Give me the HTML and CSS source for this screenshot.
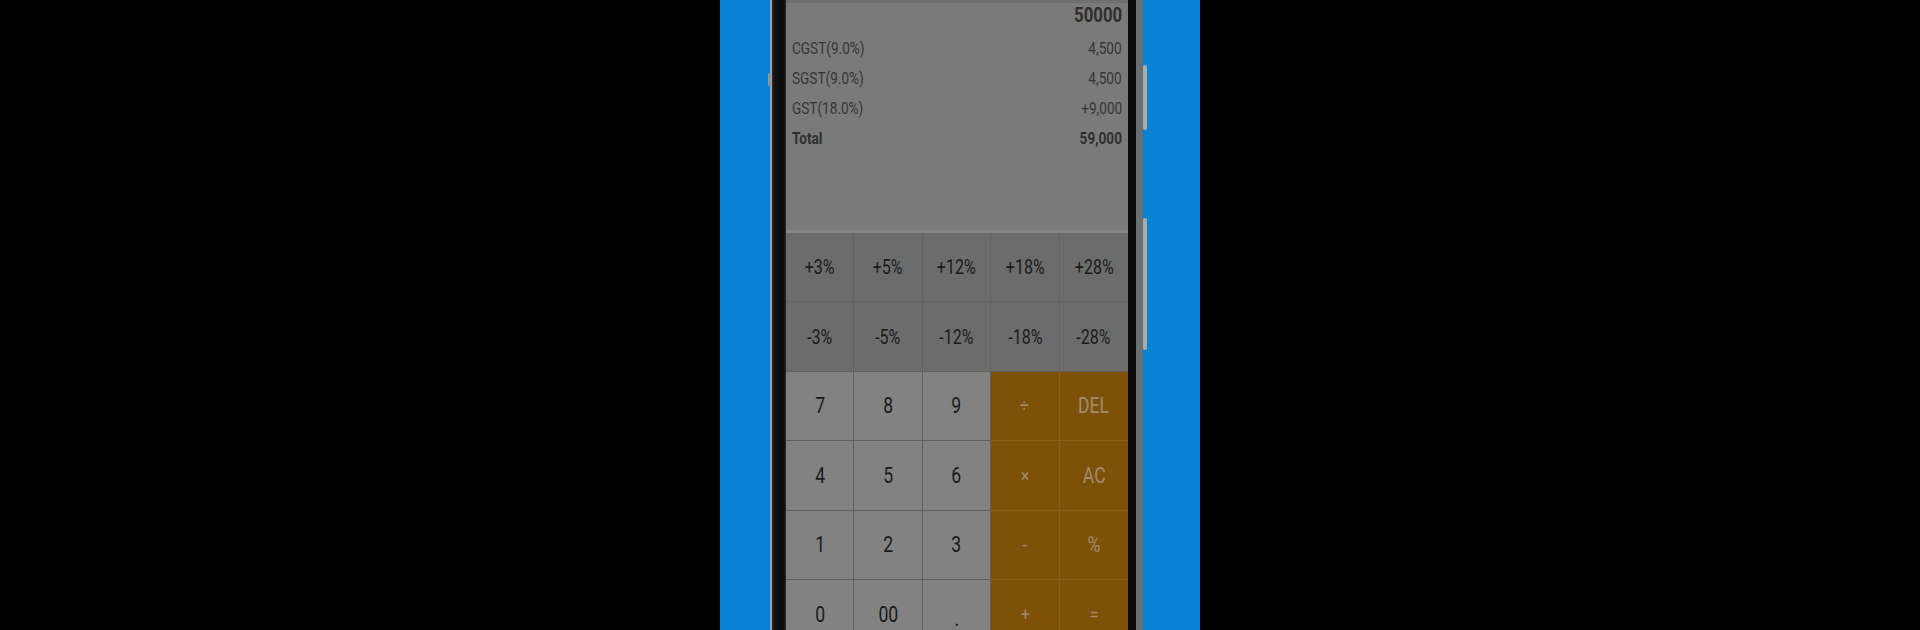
FILE: index.html
```html
<!DOCTYPE html>
<html lang="en">
<head>
<meta charset="utf-8">
<title>GST Calculator</title>
<link rel="stylesheet" href="styles.css">
</head>
<body>
<div class="stage">
  <div class="panel">
    <div class="phone">
      <span class="side-btn left-btn"></span>
      <span class="side-btn right-btn one"></span>
      <span class="side-btn right-btn two"></span>
      <div class="bezel">
        <div class="screen">
          <div class="display">
            <div class="row amount"><span class="c r">50000</span></div>
            <div class="row"><span class="c">CGST(9.0%)</span><span class="c r">4,500</span></div>
            <div class="row"><span class="c">SGST(9.0%)</span><span class="c r">4,500</span></div>
            <div class="row"><span class="c">GST(18.0%)</span><span class="c r">+9,000</span></div>
            <div class="row total"><span class="c">Total</span><span class="c r">59,000</span></div>
          </div>
          <div class="keypad">
            <div class="key pct"><span class="c m">+3%</span></div>
            <div class="key pct"><span class="c m">+5%</span></div>
            <div class="key pct"><span class="c m">+12%</span></div>
            <div class="key pct"><span class="c m">+18%</span></div>
            <div class="key pct last"><span class="c m">+28%</span></div>

            <div class="key pct"><span class="c m">-3%</span></div>
            <div class="key pct"><span class="c m">-5%</span></div>
            <div class="key pct"><span class="c m">-12%</span></div>
            <div class="key pct"><span class="c m">-18%</span></div>
            <div class="key pct last"><span class="c m">-28%</span></div>

            <div class="key num"><span class="c m">7</span></div>
            <div class="key num"><span class="c m">8</span></div>
            <div class="key num"><span class="c m">9</span></div>
            <div class="key op"><span class="c m sym">÷</span></div>
            <div class="key op last"><span class="c m">DEL</span></div>

            <div class="key num"><span class="c m">4</span></div>
            <div class="key num"><span class="c m">5</span></div>
            <div class="key num"><span class="c m">6</span></div>
            <div class="key op"><span class="c m sym">×</span></div>
            <div class="key op last"><span class="c m">AC</span></div>

            <div class="key num"><span class="c m">1</span></div>
            <div class="key num"><span class="c m">2</span></div>
            <div class="key num"><span class="c m">3</span></div>
            <div class="key op"><span class="c m sym">-</span></div>
            <div class="key op last"><span class="c m">%</span></div>

            <div class="key num"><span class="c m">0</span></div>
            <div class="key num"><span class="c m">00</span></div>
            <div class="key num"><span class="c m dot">.</span></div>
            <div class="key op"><span class="c m sym">+</span></div>
            <div class="key op last"><span class="c m sym">=</span></div>
          </div>
        </div>
      </div>
    </div>
  </div>
</div>
</body>
</html>
```

FILE: styles.css
```css
* { box-sizing: border-box; }

html, body {
  margin: 0;
  padding: 0;
  background: #000;
  width: 1920px;
  height: 630px;
  overflow: hidden;
  font-family: Roboto, "Liberation Sans", sans-serif;
}

.stage {
  display: flex;
  justify-content: center;
  height: 630px;
}

.panel {
  width: 480px;
  height: 630px;
  background: #0683d2;
  padding-left: 50px;
}

.phone {
  position: relative;
  width: 373px;
  height: 630px;
  border-left: 2px solid #9aa3aa;
  border-right: 7px solid #6a6f74;
  background: #0b0b0b;
}

.side-btn {
  position: absolute;
  background: #a7adb2;
  border-radius: 2px;
}
.left-btn { left: -4px; top: 73px; width: 3px; height: 13px; background: #8e959b; }
.right-btn { right: -11px; width: 4px; }
.right-btn.one { top: 65px; height: 65px; }
.right-btn.two { top: 218px; height: 132px; }

.bezel {
  height: 630px;
  padding: 0 8px 0 14px;
  background: linear-gradient(to right, #2b2b2b 0, #111 3px, #0b0b0b 11px, #262626 14px, #0b0b0b 14px);
}

.screen {
  width: 342px;
  height: 630px;
  overflow: hidden;
  background: #7a7a7a;
  border-top: 3px solid #6f6f6f;
}

.display {
  height: 230px;
  padding: 0 6px;
  border-bottom: 3px solid #858585;
  color: #363636;
  font-size: 17px;
}

.row {
  display: flex;
  justify-content: space-between;
  height: 30px;
  line-height: 30px;
}

.row.amount {
  justify-content: flex-end;
  height: 30px;
  line-height: 25px;
  font-size: 21px;
  font-weight: 700;
  color: #2e2e2e;
}

.row.total { font-weight: 700; color: #303030; }

.c {
  display: inline-block;
  transform: scaleX(0.8);
  transform-origin: left center;
  white-space: nowrap;
}
.c.r { transform-origin: right center; }
.c.m { transform-origin: center center; }

.keypad {
  display: grid;
  grid-template-columns: repeat(5, 1fr);
  grid-auto-rows: 69.4px;
}

.key {
  display: flex;
  align-items: center;
  justify-content: center;
  border-right: 1px solid;
  border-bottom: 1px solid;
  font-size: 21px;
}
.key.last { border-right: 0; }

.key.pct {
  background: #6c6c6c;
  border-color: #636363;
  color: #1b1b1b;
  font-size: 20px;
}

.key.num {
  background: #828282;
  border-color: #5f5f5f;
  color: #1a1a1a;
  font-size: 22px;
}

.key.op {
  background: #7d5208;
  border-color: #87601f;
  color: #a08c72;
  font-size: 22px;
}

.sym { font-size: 19px; }
.dot { padding-top: 8px; }
```
